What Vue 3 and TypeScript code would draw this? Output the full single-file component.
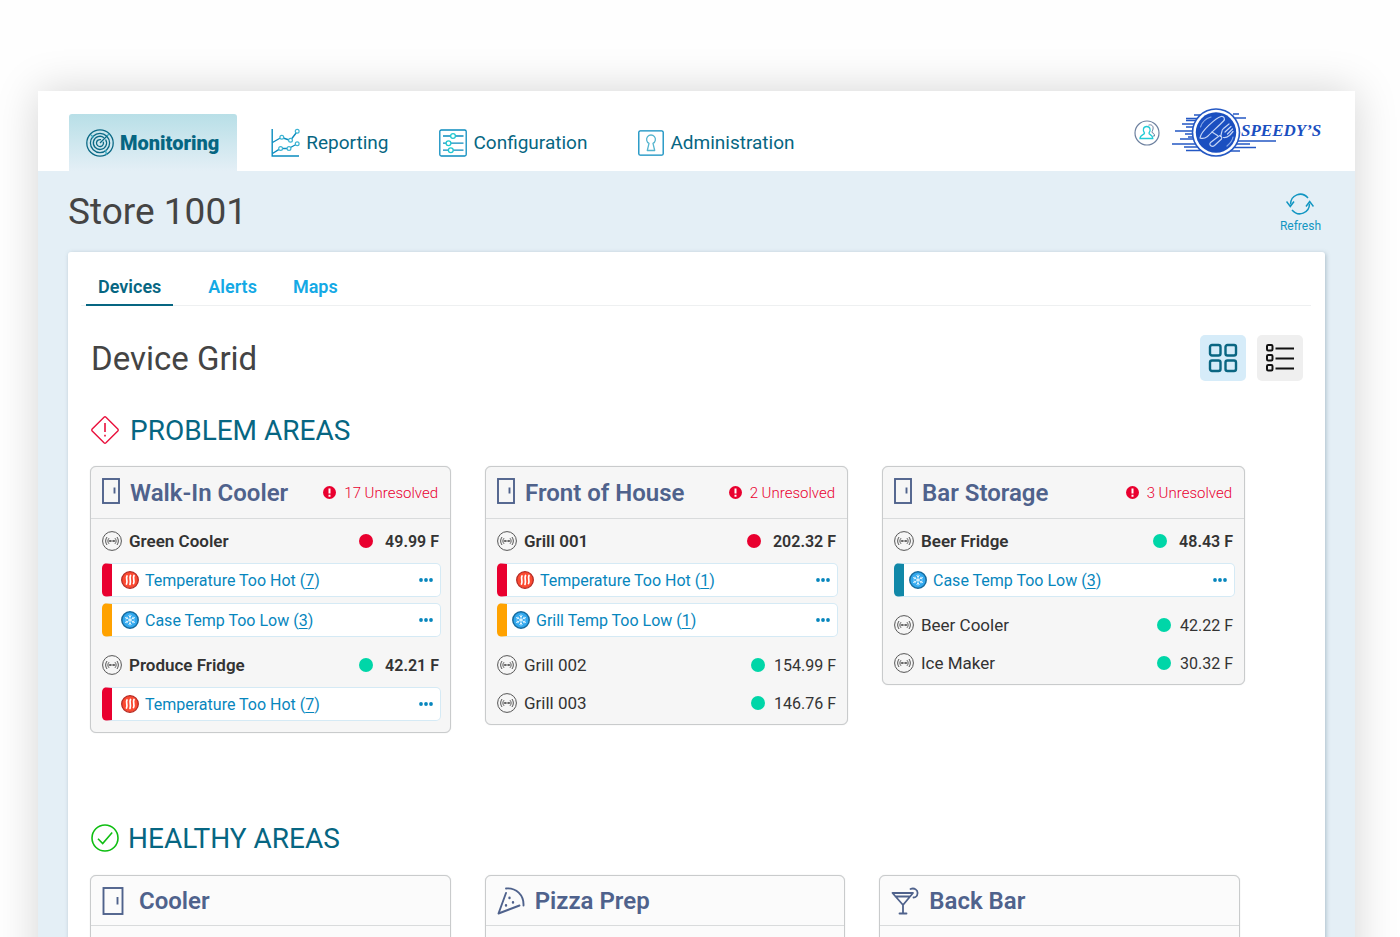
<script setup lang="ts">
type Tone = 'critical' | 'warning' | 'info'

interface DeviceAlert {
  label: string
  count: number
  kind: 'hot' | 'cold'
  tone: Tone
  tight?: boolean
}

interface Device {
  name: string
  value: string
  ok: boolean
  strong?: boolean
  alerts?: DeviceAlert[]
}

interface Area {
  name: string
  unresolved: number
  devices: Device[]
}

const problemAreas: Area[] = [
  {
    name: 'Walk-In Cooler',
    unresolved: 17,
    devices: [
      {
        name: 'Green Cooler',
        value: '49.99 F',
        ok: false,
        strong: true,
        alerts: [
          { label: 'Temperature Too Hot', count: 7, kind: 'hot', tone: 'critical' },
          { label: 'Case Temp Too Low', count: 3, kind: 'cold', tone: 'warning' },
        ],
      },
      {
        name: 'Produce Fridge',
        value: '42.21 F',
        ok: true,
        strong: true,
        alerts: [{ label: 'Temperature Too Hot', count: 7, kind: 'hot', tone: 'critical' }],
      },
    ],
  },
  {
    name: 'Front of House',
    unresolved: 2,
    devices: [
      {
        name: 'Grill 001',
        value: '202.32 F',
        ok: false,
        strong: true,
        alerts: [
          { label: 'Temperature Too Hot', count: 1, kind: 'hot', tone: 'critical' },
          { label: 'Grill Temp Too Low', count: 1, kind: 'cold', tone: 'warning', tight: true },
        ],
      },
      { name: 'Grill 002', value: '154.99 F', ok: true },
      { name: 'Grill 003', value: '146.76 F', ok: true },
    ],
  },
  {
    name: 'Bar Storage',
    unresolved: 3,
    devices: [
      {
        name: 'Beer Fridge',
        value: '48.43 F',
        ok: true,
        strong: true,
        alerts: [{ label: 'Case Temp Too Low', count: 3, kind: 'cold', tone: 'info', tight: true }],
      },
      { name: 'Beer Cooler', value: '42.22 F', ok: true },
      { name: 'Ice Maker', value: '30.32 F', ok: true },
    ],
  },
]

const healthyAreas = [
  { name: 'Cooler', icon: 'door' },
  { name: 'Pizza Prep', icon: 'pizza' },
  { name: 'Back Bar', icon: 'drink' },
]
</script>

<template>
  <div class="page">
    <div class="window">
      <header class="topbar">
        <nav class="nav" aria-label="Main">
          <a href="#monitoring" class="nav-item active" aria-current="page">
            <svg width="28" height="28" viewBox="0 0 28 28" fill="none" stroke="#0b6985" stroke-width="1.3">
              <circle cx="14" cy="14" r="13.2" />
              <circle cx="14" cy="14" r="9.6" />
              <path d="M18 8.7A6.6 6.6 0 1 0 19.6 10.5" />
              <path d="M15 10.7A3.5 3.5 0 1 0 17.2 12.7" />
              <path d="M14 14L21.5 6.5" />
              <path d="M23 5L21 7M5 6L7.5 8.5M19.5 21L20.5 26" stroke="#35a5bd" />
            </svg>
            <span>Monitoring</span>
          </a>
          <a href="#reporting" class="nav-item">
            <svg width="29" height="29" viewBox="0 0 29 29" fill="none" stroke="#0b8cbf" stroke-width="1.4">
              <path d="M1.2 1V28H28" />
              <path d="M1.5 14.5L9.3 10M12.3 10L18 12M20.7 10.7L25.3 4.7" />
              <path d="M1.5 25.5L8 21.3M11.5 20.5H16.5M19.5 19.5L25 16.5" />
              <g stroke="#3db4d3" stroke-width="1.2" fill="#fff">
                <circle cx="10.8" cy="9.2" r="1.9" />
                <circle cx="19.5" cy="12.2" r="1.9" />
                <circle cx="26.2" cy="3.3" r="1.9" />
                <circle cx="9.6" cy="20.5" r="1.9" />
                <circle cx="18" cy="20.5" r="1.9" />
                <circle cx="26.2" cy="15.8" r="1.9" />
              </g>
            </svg>
            <span>Reporting</span>
          </a>
          <a href="#configuration" class="nav-item">
            <svg width="28" height="28" viewBox="0 0 28 28" fill="none" stroke="#0b8cbf" stroke-width="1.3">
              <rect x="0.8" y="1" width="26.4" height="26" rx="1.5" />
              <path d="M4 7H24.5M4 14.2H24.5M4 21.2H24.5" />
              <g stroke="#1fc8d0" fill="#fff">
                <circle cx="14" cy="7" r="2.4" />
                <circle cx="9.5" cy="14.2" r="2.4" />
                <circle cx="11.8" cy="21.2" r="2.4" />
              </g>
            </svg>
            <span>Configuration</span>
          </a>
          <a href="#administration" class="nav-item">
            <svg width="26" height="26" viewBox="0 0 26 26" fill="none" stroke="#0b8cbf" stroke-width="1.3">
              <rect x="0.8" y="0.8" width="24.4" height="24.4" rx="1.5" />
              <path d="M11 13.3A4.4 4.4 0 1 1 15 13.3L16.7 20.5H9.3Z" stroke="#55b5cf" stroke-linejoin="round" />
            </svg>
            <span>Administration</span>
          </a>
        </nav>
        <div class="account">
          <button type="button" aria-label="Account">
            <svg width="26" height="26" viewBox="0 0 26 26" fill="none">
              <circle cx="13" cy="13" r="12" stroke="#6d809f" stroke-width="1.2" />
              <path d="M14.5 5.2C17.5 4 19.7 6 19 9C18.8 10.500 17.800 11.500 18 12.500C20 13.500 20.500 14 20.500 16H19" stroke="#6d809f" />
              <path d="M10.500 13C8.500 10.500 9 6.500 12.700 6.500S17 10.500 15 13C14.700 14.800 18.800 14.500 18.800 18.500H6C6 14.500 10.800 14.800 10.500 13Z" stroke="#22cbd6" stroke-width="1.3" />
            </svg>
          </button>
          <a href="#home">
            <svg width="152" height="50" viewBox="0 0 152 50">
              <g stroke="#2458c4" stroke-width="1.7">
                <path d="M22 7H30M14 10.500H28M14 12.500H28M10 16H26M14 19H26M3 23H26M13 26H25M16 29H26M8 31H26M0 36H26M12 39H27M14 42.500H30M61 6H67M63 10H74M62 33H104M62 36H78M58 39.500H84M54 43H68" />
              </g>
              <circle cx="44" cy="24.5" r="24.3" fill="#2458c4" />
              <circle cx="44" cy="24.5" r="22.7" fill="#fff" />
              <circle cx="44" cy="24.5" r="20.2" fill="#1b4fc0" />
              <g fill="none" stroke="#c5d5f6" stroke-width="1.2" stroke-linecap="round" stroke-linejoin="round">
                <path d="M28 30C29 23 44 10 49 8.500C52 8 53.500 11 51.500 13C48 16.500 38 26 35.500 28.500C33.500 30 30.500 31 28 30Z" />
                <path d="M40 24L45.500 27.500" />
                <path d="M38.500 34.500L47 28C48.500 27 50.500 29 49.500 31L42.500 37.500C40 39.500 36.500 37 38.500 34.500Z" />
                <path d="M48.500 28.500C50 26 49 22 51.500 20.500L57 16M51.500 29.500C55 30 55.500 29 58 27L61 23.500M53 24L59 18.500M55.500 26L60.500 21" />
                <path d="M28.500 19C30 14 34 10.500 39 9M55 38C58 35.500 60.500 32.500 61 29" stroke="#88a9e8" />
              </g>
              <text x="69" y="28" class="brand-text">SPEEDY’S</text>
            </svg>
          </a>
        </div>
      </header>

      <main class="content">
        <div class="title-row">
          <h1>Store 1001</h1>
          <button class="refresh" type="button">
            <svg width="28" height="22" viewBox="0 0 28 22" fill="none" stroke="#1296c2" stroke-width="1.5">
              <path d="M4.500 11.500C4.500 2 15.500-2.500 22 5" />
              <path d="M23.500 10.500C23.500 20 12.500 24.500 6 17" />
              <path d="M0.500 8.500L4.300 13.500L8 8.500M20 13.500L23.700 8.500L27.500 13.500" />
            </svg>
            <span>Refresh</span>
          </button>
        </div>

        <section class="panel">
          <nav class="tabs" aria-label="Store views">
            <a href="#devices" class="tab current">Devices</a>
            <a href="#alerts" class="tab">Alerts</a>
            <a href="#maps" class="tab">Maps</a>
          </nav>

          <div class="grid-head">
            <h2>Device Grid</h2>
            <div class="views">
              <button class="view selected" type="button" aria-label="Grid view" aria-pressed="true">
                <svg width="30" height="30" viewBox="0 0 30 30" fill="none" stroke="#0a6682" stroke-width="2.4">
                  <rect x="2" y="2" width="10.5" height="10.5" rx="2" />
                  <rect x="17.5" y="2" width="10.5" height="10.5" rx="2" />
                  <rect x="2" y="17.5" width="10.5" height="10.5" rx="2" />
                  <rect x="17.5" y="17.5" width="10.5" height="10.5" rx="2" />
                </svg>
              </button>
              <button class="view" type="button" aria-label="List view" aria-pressed="false">
                <svg width="30" height="30" viewBox="0 0 30 30" fill="none" stroke="#111" stroke-width="2">
                  <rect x="2" y="2" width="5.5" height="5.5" rx="1.2" />
                  <rect x="2" y="12" width="5.5" height="5.5" rx="1.2" />
                  <rect x="2" y="22" width="5.5" height="5.5" rx="1.2" />
                  <path d="M10.500 5.500H29M10.500 15.500H29M10.500 25.500H29" />
                </svg>
              </button>
            </div>
          </div>

          <div class="section-title">
            <svg width="28" height="28" viewBox="0 0 28 28" fill="none" stroke="#e9103c" stroke-width="1.4">
              <path d="M13 1.200Q14 0.400 15 1.200L26.800 13Q27.600 14 26.800 15L15 26.800Q14 27.600 13 26.800L1.200 15Q0.400 14 1.200 13Z" />
              <path d="M14 7V16M14 18.700V20.600" stroke-width="1.6" />
            </svg>
            <h3>PROBLEM AREAS</h3>
          </div>

          <div class="cards">
            <article v-for="area in problemAreas" :key="area.name" class="card">
              <div class="card-head">
                <svg class="door" width="18" height="26" viewBox="0 0 18 26" fill="none" stroke="#4f628c" stroke-width="1.9">
                  <rect x="1" y="1" width="16" height="24" />
                  <path d="M12.500 9.500V15.500" />
                </svg>
                <h4>{{ area.name }}</h4>
                <p class="unresolved">
                  <svg width="13" height="13" viewBox="0 0 13 13">
                    <circle cx="6.5" cy="6.5" r="6.5" fill="#e9002f" />
                    <path d="M6.500 2.500V7.500M6.500 8.700V10.700" stroke="#fff" stroke-width="2" />
                  </svg>
                  {{ area.unresolved }} Unresolved
                </p>
              </div>
              <ul class="devices">
                <li v-for="device in area.devices" :key="device.name">
                  <div class="device" :class="{ strong: device.strong }">
                    <svg width="20" height="20" viewBox="0 0 20 20" fill="none" stroke="#555" stroke-width="1">
                      <circle cx="10" cy="10" r="9.4" />
                      <path d="M8 10H12M5 6C3.200 8.500 3.200 11.500 5 14M15 6C16.800 8.500 16.800 11.500 15 14M7 7.200C5.500 9 5.500 11 7 12.800M13 7.200C14.500 9 14.500 11 13 12.800" />
                      <circle cx="8" cy="10" r="0.7" />
                      <circle cx="12" cy="10" r="0.7" />
                    </svg>
                    <span>{{ device.name }}</span>
                    <i class="dot" :class="{ ok: device.ok }"></i>
                    <span class="value">{{ device.value }}</span>
                  </div>
                  <div v-if="device.alerts" class="alerts">
                    <div
                      v-for="alert in device.alerts"
                      :key="alert.label"
                      class="alert"
                      :class="[alert.tone, { tight: alert.tight }]"
                    >
                      <svg v-if="alert.kind === 'hot'" width="18" height="18" viewBox="0 0 18 18">
                        <circle cx="9" cy="9" r="8.3" fill="#fb4a32" stroke="#b42a24" stroke-width="1.3" />
                        <path d="M6 5C4.500 7.500 7 9 5.500 13M9.500 4.500C8 7.500 10.500 9 9 13.500M13 4.500C11.500 7.500 14 9 12.500 12.500" fill="none" stroke="#fff" stroke-width="1.7" stroke-linecap="round" />
                      </svg>
                      <svg v-else width="18" height="18" viewBox="0 0 18 18">
                        <circle cx="9" cy="9" r="8.2" fill="#31a8ee" stroke="#176b9e" stroke-width="1.5" />
                        <path d="M9 3.500V14.500M4.200 6.300L13.800 11.700M4.200 11.700L13.800 6.300M7.500 4.500L9 6L10.500 4.500M7.500 13.500L9 12L10.500 13.500M4.500 8L6.300 7.500L6 5.700M13.500 8L11.700 7.500L12 5.700M4.500 10L6.300 10.500L6 12.300M13.500 10L11.700 10.500L12 12.300" fill="none" stroke="#e4f6ff" />
                      </svg>
                      <a href="#alerts">{{ alert.label }} (<u>{{ alert.count }}</u>)</a>
                      <button class="more" type="button" aria-label="More actions">
                        <svg width="14" height="4" viewBox="0 0 14 4" fill="#0786bd">
                          <circle cx="2" cy="2" r="1.9" />
                          <circle cx="7" cy="2" r="1.9" />
                          <circle cx="12" cy="2" r="1.9" />
                        </svg>
                      </button>
                    </div>
                  </div>
                </li>
              </ul>
            </article>
          </div>

          <div class="section-title healthy-title">
            <svg width="28" height="28" viewBox="0 0 28 28" fill="none" stroke="#0fbe12" stroke-width="1.6">
              <circle cx="14" cy="14" r="13" />
              <path d="M7 14.700L11.700 19.500L21.200 8.500" />
            </svg>
            <h3>HEALTHY AREAS</h3>
          </div>

          <div class="cards healthy">
            <article v-for="area in healthyAreas" :key="area.name" class="card">
              <div class="card-head">
                <svg v-if="area.icon === 'door'" class="wide" width="22" height="28" viewBox="0 0 22 28" fill="none" stroke="#4f628c" stroke-width="1.9">
                  <rect x="1.5" y="1" width="19" height="26" />
                  <path d="M15.500 10V17.500" />
                </svg>
                <svg v-else-if="area.icon === 'pizza'" width="28" height="28" viewBox="0 0 28 28" fill="none" stroke="#4f628c" stroke-width="1.9" stroke-linecap="round" stroke-linejoin="round">
                  <path d="M9 1.500C19 0.500 27 8 26.500 18.500M9 6L1.500 26.500L22.500 18.500" />
                  <path d="M12.500 10.700V11M16 15.300V15.600M9 18.300V18.600" stroke-width="2.4" />
                </svg>
                <svg v-else width="28" height="28" viewBox="0 0 28 28" fill="none" stroke="#4f628c" stroke-width="1.8" stroke-linecap="round" stroke-linejoin="round">
                  <path d="M1.500 6H22L12 18Z M4.500 9.500H19M12 18V26.500M8.500 26.500H15.500" />
                  <path d="M19.500 2C23.500 0.500 27 3 26.500 6.500C26.200 9 24.500 10.500 22.500 10.500" />
                </svg>
                <h4>{{ area.name }}</h4>
              </div>
              <div class="card-space"></div>
            </article>
          </div>
        </section>
      </main>
    </div>
  </div>
</template>

<style>
body {
  margin: 0;
  background: #fefefe;
}
</style>

<style scoped>
.page {
  box-sizing: border-box;
  height: 100vh;
  overflow: hidden;
  padding: 91px 45px 0 38px;
  background: #fefefe;
  font-family: Roboto, "Liberation Sans", sans-serif;
  color: #333;
}

h1, h2, h3, h4, p, ul {
  margin: 0;
  padding: 0;
  font-weight: 400;
}

a {
  color: inherit;
  text-decoration: none;
}

button {
  border: 0;
  padding: 0;
  background: none;
  font: inherit;
  cursor: pointer;
}

svg {
  flex: none;
  display: block;
}

.window {
  min-height: 100vh;
  background: #e4eff6;
  box-shadow: 0 0 40px rgba(0, 0, 0, 0.17);
}

.topbar {
  display: flex;
  justify-content: space-between;
  height: 80px;
  padding: 0 31px;
  background: #fff;
}

.nav {
  display: flex;
  align-items: flex-end;
  gap: 17px;
}

.nav-item {
  display: flex;
  align-items: center;
  gap: 6px;
  height: 57px;
  padding: 0 17px;
  font-size: 19px;
  color: #066682;
}

.nav-item.active {
  padding-right: 18px;
  border-radius: 3px 3px 0 0;
  background: linear-gradient(#b8dfe7, #e4eff6);
  font-size: 20px;
  font-weight: 900;
}

.account {
  display: flex;
  align-items: center;
  gap: 12px;
  padding-top: 3px;
}

.brand-text {
  fill: #1b4fc0;
  font: italic 700 17px "Liberation Serif", serif;
}

.content {
  padding: 0 30px;
}

.title-row {
  display: flex;
  justify-content: space-between;
  align-items: center;
  height: 81px;
  padding-right: 4px;
}

h1 {
  font-size: 37px;
  color: #444;
}

.refresh {
  display: flex;
  flex-direction: column;
  align-items: center;
  gap: 4px;
  padding-top: 3px;
  font-size: 12px;
  line-height: 14px;
  color: #1296c2;
}

.panel {
  min-height: 700px;
  border-radius: 3px;
  background: #fff;
  box-shadow: 1px 1px 4px rgba(70, 100, 120, 0.35);
}

.tabs {
  display: flex;
  gap: 12px;
  margin: 0 14px 0 13px;
  padding: 17px 5px 0;
  border-bottom: 1px solid #eef0f1;
}

.tab {
  height: 35px;
  margin-bottom: -1px;
  padding: 0 12px;
  line-height: 36px;
  font-size: 18px;
  font-weight: 600;
  color: #14a9e5;
}

.tab.current {
  margin-right: 11px;
  border-bottom: 2px solid #066682;
  color: #066682;
}

.grid-head {
  display: flex;
  justify-content: space-between;
  align-items: center;
  padding: 29px 22px 0 23px;
}

h2 {
  font-size: 33px;
  color: #444;
}

.views {
  display: flex;
  gap: 11px;
}

.view {
  display: grid;
  place-items: center;
  width: 46px;
  height: 46px;
  border-radius: 5px;
  background: #efefef;
}

.view.selected {
  background: #d6ecf9;
}

.section-title {
  display: flex;
  align-items: center;
  gap: 11px;
  height: 34px;
  margin: 32px 23px 0;
}

.healthy-title {
  gap: 9px;
  margin-top: 88px;
}

h3 {
  font-size: 28px;
  color: #066682;
}

.cards {
  display: grid;
  grid-template-columns: 361fr 363fr 363fr;
  align-items: start;
  gap: 34px;
  margin: 19px 80px 0 22px;
}

.cards.healthy {
  grid-template-columns: repeat(3, 1fr);
  margin: 20px 85px 0 22px;
}

.card {
  border: 1px solid #c9cbcc;
  border-radius: 6px;
  background: #f6f6f6;
  box-shadow: 0 0 1px #c9cbcc;
}

.healthy .card {
  background: #fbfbfb;
}

.card-head {
  display: flex;
  align-items: center;
  height: 51px;
  padding: 0 12px 0 11px;
  border-bottom: 1px solid #d9dbdc;
}

.healthy .card-head {
  height: 49px;
}

h4 {
  margin-left: 10px;
  font-size: 24px;
  font-weight: 600;
  color: #4f628c;
}

.healthy .wide + h4 {
  margin-left: 15px;
}

.door {
  margin-bottom: 4px;
}

.card-space {
  height: 120px;
}

.unresolved {
  display: flex;
  align-items: center;
  gap: 8px;
  margin-left: auto;
  font-size: 15px;
  font-weight: 300;
  color: #e9002f;
}

.devices {
  list-style: none;
  padding: 3px 9px 2px 11px;
}

.device {
  display: flex;
  align-items: center;
  gap: 7px;
  height: 38px;
  padding-right: 2px;
  font-size: 17px;
}

.strong {
  font-weight: 600;
}

.value {
  font-size: 16px;
}

.dot {
  width: 14px;
  height: 14px;
  margin: 0 2px 0 auto;
  border-radius: 50%;
  background: #e9002f;
}

.strong .dot {
  margin-right: 5px;
}

.dot.ok {
  background: #00d6a8;
}

.alerts {
  display: grid;
  gap: 6px;
  margin: 3px 0 9px;
}

.alert {
  display: flex;
  align-items: center;
  gap: 6px;
  box-sizing: border-box;
  height: 34px;
  padding: 0 7px 0 9px;
  border: 1px solid #d5eaf5;
  border-left: 10px solid #e9002f;
  border-radius: 5px;
  background: #fff;
  font-size: 16px;
  color: #0786bd;
}

.alert.tight {
  padding-left: 5px;
}

.alert.warning {
  border-left-color: #ffa200;
}

.alert.info {
  border-left-color: #1188a8;
}

.alert u {
  text-underline-offset: 2px;
}

.more {
  margin-left: auto;
}
</style>
